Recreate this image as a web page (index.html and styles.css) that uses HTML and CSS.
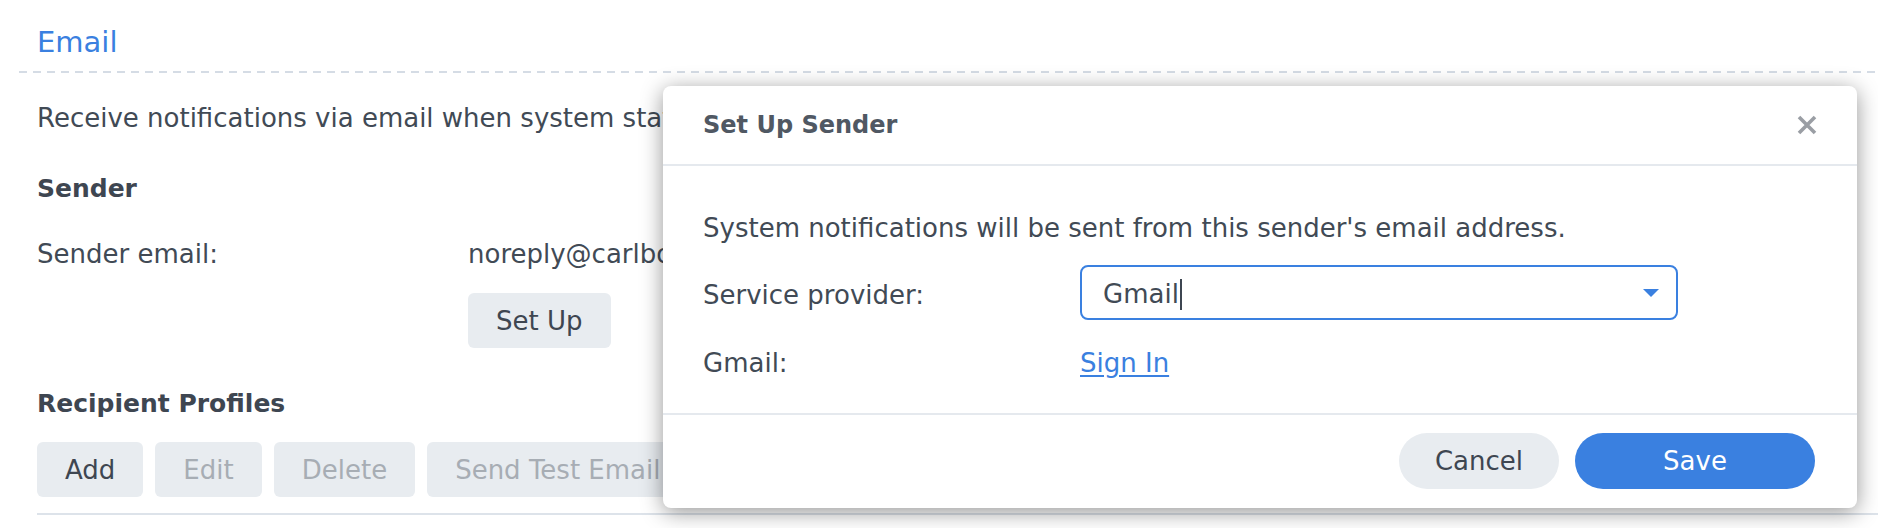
FILE: index.html
```html
<!doctype html>
<html lang="en">
<head>
    <meta charset="UTF-8">
    <title>Notification - Email</title>
    <link rel="stylesheet" href="styles.css">
</head>
<body>
<div class="page">
    <h1 class="title">Email</h1>
    <div class="dashed"></div>
    <div class="section">
        <p class="desc">Receive notifications via email when system status changes.</p>
        <h2 class="sub">Sender</h2>
        <div class="field">
            <span class="field-label">Sender email:</span>
            <span class="field-value">noreply@carlbonnet.com</span>
        </div>
        <div class="field field-btn">
            <span class="field-label"></span>
            <button class="btn">Set Up</button>
        </div>
        <h2 class="sub sub-profiles">Recipient Profiles</h2>
        <div class="toolbar">
            <button class="btn">Add</button>
            <button class="btn" disabled>Edit</button>
            <button class="btn" disabled>Delete</button>
            <button class="btn" disabled>Send Test Email</button>
        </div>
        <div class="rule"></div>
    </div>
</div>

<div class="dialog">
    <div class="dlg-head">
        <span class="dlg-title">Set Up Sender</span>
        <svg class="dlg-close" width="20" height="20" viewBox="0 0 20 20">
            <path d="M2 2L18 18M18 2L2 18" stroke="#9a9ea4" stroke-width="3.6" fill="none"/>
        </svg>
    </div>
    <div class="dlg-body">
        <p class="dlg-text">System notifications will be sent from this sender's email address.</p>
        <div class="dlg-row dlg-row-select">
            <span class="dlg-label">Service provider:</span>
            <div class="select">
                <span class="select-text">Gmail<span class="caret"></span></span>
                <svg class="select-arrow" width="16" height="8" viewBox="0 0 16 8">
                    <path d="M0 0H16L8 8Z" fill="#3a80e0"/>
                </svg>
            </div>
        </div>
        <div class="dlg-row dlg-row-link">
            <span class="dlg-label">Gmail:</span>
            <a class="link" href="javascript:;">Sign In</a>
        </div>
    </div>
    <div class="dlg-foot">
        <button class="pill pill-cancel">Cancel</button>
        <button class="pill pill-save">Save</button>
    </div>
</div>
</body>
</html>
```

FILE: styles.css
```css
*{
    margin: 0;
    padding: 0;
    box-sizing: border-box;
}
body{
    width: 1878px;
    height: 528px;
    overflow: hidden;
    background: #fff;
    font-family: "DejaVu Sans", Verdana, sans-serif;
    font-size: 26px;
    line-height: 30px;
    color: #414a55;
    position: relative;
}
.page{
    padding-left: 19px;
}
.title{
    padding: 24px 0 0 18px;
    font-size: 29px;
    line-height: 36px;
    font-weight: normal;
    color: #3a80e0;
}
.dashed{
    margin-top: 11px;
    height: 2px;
    background: repeating-linear-gradient(90deg, #d5dce5 0, #d5dce5 8px, transparent 8px, transparent 14px);
}
.section{
    padding-left: 18px;
}
.desc{
    margin-top: 30px;
    white-space: nowrap;
}
.sub{
    margin-top: 41px;
    font-size: 25px;
    line-height: 30px;
    font-weight: bold;
    color: #3e4651;
}
.field{
    display: flex;
    margin-top: 35px;
}
.field-label{
    width: 431px;
    flex-shrink: 0;
}
.field-value{
    white-space: nowrap;
}
.field-btn{
    margin-top: 24px;
}
.btn{
    height: 55px;
    padding: 0 28px;
    border: none;
    border-radius: 6px;
    background: #e8ecf0;
    font-family: inherit;
    font-size: 26px;
    line-height: 30px;
    color: #3e4651;
    white-space: nowrap;
}
.btn:disabled{
    color: #a7adb4;
}
.sub-profiles{
    margin-top: 41px;
}
.toolbar{
    display: flex;
    gap: 12px;
    margin-top: 23px;
}
.rule{
    margin-top: 16px;
    height: 2px;
    background: #dde3ea;
}

/* dialog */
.dialog{
    position: absolute;
    left: 663px;
    top: 86px;
    width: 1194px;
    background: #fff;
    border-radius: 8px;
    box-shadow: 0 4px 22px rgba(0,0,0,.42);
}
.dlg-head{
    display: flex;
    justify-content: space-between;
    align-items: center;
    height: 80px;
    padding: 0 40px;
    border-bottom: 2px solid #e5e9ee;
}
.dlg-title{
    font-size: 24px;
    font-weight: bold;
    color: #505863;
}
.dlg-body{
    padding: 47px 40px 35px;
}
.dlg-row{
    display: flex;
    align-items: center;
}
.dlg-row-select{
    margin-top: 22px;
}
.dlg-row-select .dlg-label{
    padding-top: 4px;
}
.dlg-row-link{
    margin-top: 28px;
}
.dlg-label{
    width: 377px;
    flex-shrink: 0;
}
.select{
    width: 598px;
    height: 55px;
    border: 2px solid #3a80e0;
    border-radius: 8px;
    display: flex;
    align-items: center;
    justify-content: space-between;
    padding: 4px 17px 0 21px;
}
.caret{
    display: inline-block;
    width: 2px;
    height: 31px;
    margin-left: 1px;
    background: #3e4651;
    vertical-align: -7px;
}
.select-arrow{
    margin-top: -4px;
}
.link{
    color: #3a80e0;
    text-decoration: underline;
    text-underline-offset: 3px;
}
.dlg-foot{
    display: flex;
    justify-content: flex-end;
    gap: 16px;
    padding: 18px 42px 19px 40px;
    border-top: 2px solid #e5e9ee;
}
.pill{
    height: 56px;
    border: none;
    border-radius: 28px;
    font-family: inherit;
    font-size: 26px;
}
.pill-cancel{
    width: 160px;
    background: #e8ecf0;
    color: #3e4651;
}
.pill-save{
    width: 240px;
    background: #3a80e0;
    color: #fff;
}
```
